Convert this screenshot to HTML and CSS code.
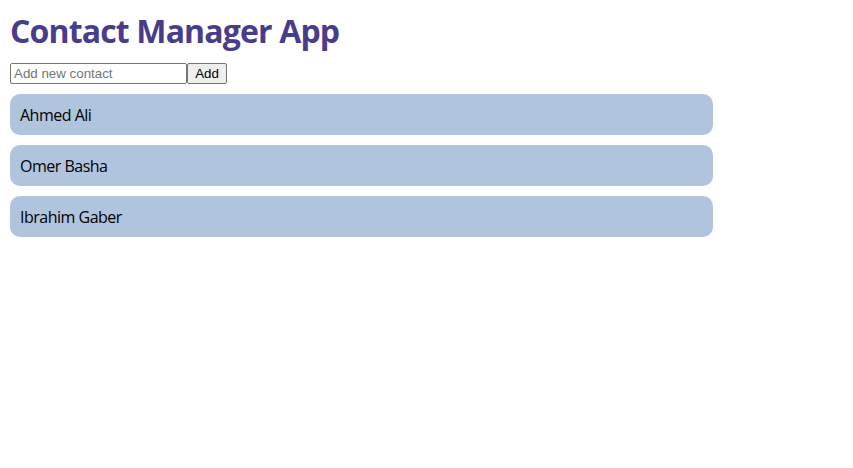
FILE: index.html
```html
<!DOCTYPE html>
<html>
<head>
<meta charset="utf-8">
<title>Contact Manager App</title>
<link rel="stylesheet" href="styles.css">
</head>
<body>
<div class="app">
  <h1 class="title">Contact Manager App</h1>
  <form class="add-form">
    <input class="add-input" type="text" placeholder="Add new contact"><button class="add-btn" type="button">Add</button>
  </form>
  <ul class="contacts">
    <li class="contact">Ahmed Ali</li>
    <li class="contact">Omer Basha</li>
    <li class="contact">Ibrahim Gaber</li>
  </ul>
</div>
</body>
</html>
```

FILE: styles.css
```css
html, body {
  margin: 0;
  padding: 0;
  background: #fff;
}
body {
  font-family: "Open Sans", "Noto Sans", sans-serif;
}
.app {
  padding: 10px;
}
.title {
  margin: 0 0 11px 0;
  padding: 0;
  font-size: 32px;
  line-height: 42px;
  font-weight: 700;
  color: #483d8b;
  letter-spacing: -0.85px;
}
.add-form {
  display: flex;
  margin: 0 0 10px 0;
}
.add-input {
  box-sizing: border-box;
  width: 177px;
  height: 21px;
  margin: 0;
  padding: 1px 3px;
  border: 1px solid #767676;
  border-radius: 2px;
  font-family: "Liberation Sans", Arial, sans-serif;
  font-size: 13.33px;
}
.add-input::placeholder {
  color: #757575;
}
.add-btn {
  box-sizing: border-box;
  width: 40px;
  height: 21px;
  margin: 0;
  padding: 1px 6px;
  border: 1px solid #767676;
  border-radius: 2px;
  background: #efefef;
  font-family: "Liberation Sans", Arial, sans-serif;
  font-size: 13.33px;
  color: #000;
}
.contacts {
  list-style: none;
  margin: 0;
  padding: 0;
  display: flex;
  flex-direction: column;
  gap: 10px;
}
.contact {
  box-sizing: border-box;
  width: 703px;
  height: 41px;
  padding: 0 10px;
  display: flex;
  align-items: center;
  background: #b0c4de;
  border-radius: 10px;
  font-size: 16px;
  letter-spacing: -0.5px;
  color: #000;
}
```
